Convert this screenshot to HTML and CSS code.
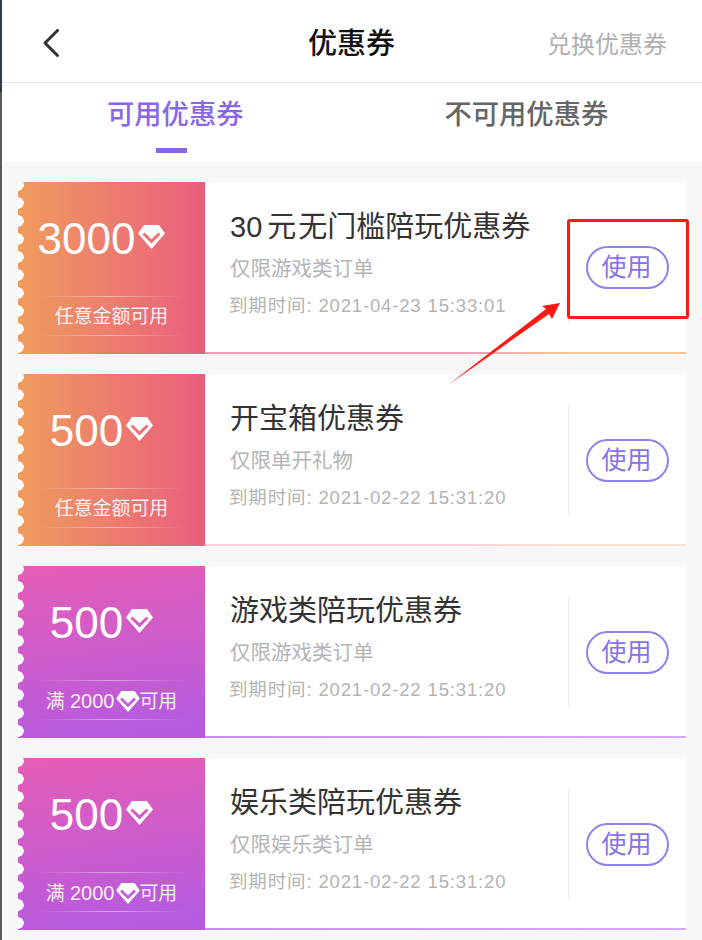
FILE: index.html
```html
<!DOCTYPE html>
<html lang="zh-CN">
<head>
    <meta charset="UTF-8">
    <meta name="viewport" content="width=device-width, initial-scale=1.0">
    <title>优惠券</title>
    <link rel="stylesheet" href="styles.css">
</head>
<body>
    <svg class="defs" width="0" height="0">
        <symbol id="gem" viewBox="0 0 27 24">
            <path fill="#fff" fill-rule="evenodd" d="M6 0H21L27 8.500 13.500 24 0 8.500ZM6.500 7.500 4.500 9.600 13.500 18.600 22.500 9.600 20.500 7.500 13.500 14.200Z"/>
        </symbol>
    </svg>
    <div class="page">
        <header class="topbar">
            <svg class="back" width="16" height="28" viewBox="0 0 16 28"><path d="M14.500 1.500 2 14l12.500 12.500" fill="none" stroke="#333" stroke-width="3" stroke-linecap="round" stroke-linejoin="round"/></svg>
            <h1>优惠券</h1>
            <a class="redeem">兑换优惠券</a>
        </header>
        <nav class="tabs">
            <div class="tab active">可用优惠券</div>
            <div class="tab">不可用优惠券</div>
        </nav>
        <main class="list">
            <section class="coupon orange strong">
                <div class="stub">
                    <div class="amount">3000<svg class="gem"><use href="#gem"/></svg></div>
                    <div class="limit">任意金额可用</div>
                </div>
                <div class="info">
                    <h2>30<span class="yuan">元</span>无门槛陪玩优惠券</h2>
                    <p class="scope">仅限游戏类订单</p>
                    <p class="date">到期时间: 2021-04-23 15:33:01</p>
                </div>
                <div class="action first"><button>使用</button></div>
            </section>
            <section class="coupon orange">
                <div class="stub">
                    <div class="amount">500<svg class="gem"><use href="#gem"/></svg></div>
                    <div class="limit">任意金额可用</div>
                </div>
                <div class="info">
                    <h2>开宝箱优惠券</h2>
                    <p class="scope">仅限单开礼物</p>
                    <p class="date">到期时间: 2021-02-22 15:31:20</p>
                </div>
                <div class="action"><button>使用</button></div>
            </section>
            <section class="coupon purple">
                <div class="stub">
                    <div class="amount">500<svg class="gem"><use href="#gem"/></svg></div>
                    <div class="limit">满 <span class="num">2000</span><svg class="gem-small"><use href="#gem"/></svg>可用</div>
                </div>
                <div class="info">
                    <h2>游戏类陪玩优惠券</h2>
                    <p class="scope">仅限游戏类订单</p>
                    <p class="date">到期时间: 2021-02-22 15:31:20</p>
                </div>
                <div class="action"><button>使用</button></div>
            </section>
            <section class="coupon purple">
                <div class="stub">
                    <div class="amount">500<svg class="gem"><use href="#gem"/></svg></div>
                    <div class="limit">满 <span class="num">2000</span><svg class="gem-small"><use href="#gem"/></svg>可用</div>
                </div>
                <div class="info">
                    <h2>娱乐类陪玩优惠券</h2>
                    <p class="scope">仅限娱乐类订单</p>
                    <p class="date">到期时间: 2021-02-22 15:31:20</p>
                </div>
                <div class="action"><button>使用</button></div>
            </section>
        </main>
    </div>
    <!-- annotation drawn over the screenshot -->
    <div class="mark-box"></div>
    <svg class="mark-arrow" width="120" height="90" viewBox="0 0 120 90"><path fill="#fb1a14" d="M1 87 99 11 95 8 113 5 105 21 102 16Z"/></svg>
</body>
</html>
```

FILE: styles.css
```css
* { box-sizing: border-box; }
html, body { margin: 0; padding: 0; }
body { font-family: "Liberation Sans", "Noto Sans CJK SC", sans-serif; background: #f7f7f7; width: 702px; height: 940px; overflow: hidden; position: relative; }
.defs { position: absolute; }
.page { border-left: 2px solid; border-image: linear-gradient(#2c3e4e 93px, #5a5a5a 93px) 1; height: 940px; }

.topbar { height: 83px; background: #fff; border-bottom: 1px solid #e4e4e4; display: flex; align-items: center; justify-content: space-between; padding: 0 35px 0 41px; position: relative; }
.back { margin-top: 4px; }
.topbar h1 { margin: 0; font-size: 29px; font-weight: 500; color: #111; position: absolute; left: 306px; top: 24px; line-height: 40px; }
.redeem { font-size: 24px; color: #b0b0b0; line-height: 34px; margin-top: 7px; }

.tabs { height: 79px; background: #fff; display: flex; }
.tab { font-size: 27.300px; font-weight: 500; color: #666; line-height: 62px; padding: 1px 0 0 105px; position: relative; }
.tab:nth-child(2) { padding-left: 201px; }
.tab.active { color: #8868e8; }
.tab.active::after { content: ""; position: absolute; left: 154px; top: 65px; width: 31px; height: 5px; background: #8868e8; }

.list { padding: 20px 16px 0 16px; display: flex; flex-direction: column; gap: 20px; }
.coupon { height: 172px; background: #fff; display: flex; position: relative; }
.coupon::after { content: ""; position: absolute; left: 187px; right: 0; bottom: 0; height: 2px; }
.orange::after { background: linear-gradient(90deg, #fad0de 55%, #f8e4d0 75%); }
.orange.strong::after { background: linear-gradient(90deg, #eda0bc 55%, #f2c896 75%); }
.purple::after { background: linear-gradient(90deg, #c88ef2, #d9a8ee); }

.stub { width: 187px; position: relative; color: #fff; display: flex; flex-direction: column; align-items: center; }
.orange .stub { background: linear-gradient(90deg, #f09c5c, #e95e80); }
.purple .stub { background: linear-gradient(172deg, #e65eb6, #b25ae2); }
.stub::before { content: ""; position: absolute; left: 0; top: 0; bottom: 0; width: 6px; background: radial-gradient(circle at 0 9px, #fff 5.500px, transparent 6px) 0 -6px / 6px 18px repeat-y; }
.amount { height: 114px; padding: 32px 20px 0 0; font-size: 44px; line-height: 50px; display: flex; align-items: flex-start; }
.gem { width: 27px; height: 24px; margin: 11px 0 0 3px; }
.limit { width: 147px; height: 40px; font-size: 18.900px; line-height: 42px; text-align: center; position: relative; white-space: nowrap; color: #fdeef0; }
.limit::before, .limit::after { content: ""; position: absolute; left: 0; right: 0; height: 1px; background: linear-gradient(90deg, transparent, rgba(255,255,255,.45), transparent); }
.limit::before { top: 0; }
.limit::after { bottom: 0; }
.num { font-size: 20px; }
.gem-small { width: 24px; height: 21px; vertical-align: -4px; margin: 0 -1px 0 2px; }

.info { width: 363px; padding: 24px 0 0 25px; }
.info h2 { margin: 0; font-size: 29px; font-weight: 400; color: #333; line-height: 42px; white-space: nowrap; }
.yuan { margin-left: 5px; margin-right: 2px; }
.scope { margin: 6px 0 0; font-size: 20.500px; color: #b4b4b4; line-height: 30px; }
.date { margin: 9px 0 0 -1px; font-size: 18.500px; color: #b4b4b4; line-height: 26px; white-space: nowrap; letter-spacing: .85px; }

.action { flex: 1; display: flex; align-items: center; margin: 32px 0; border-left: 1px solid #e8e8e8; padding-left: 17px; }
.action.first { padding-bottom: 1px; }
.action button { width: 83px; height: 43px; border: 2px solid #8e84ec; border-radius: 22px; background: #fff; color: #8a70ea; font-family: inherit; font-size: 25px; line-height: 1; padding: 0 2px 0 0; }

.mark-box { position: absolute; left: 567px; top: 219px; width: 122px; height: 100px; border: 3px solid #fb1a14; border-radius: 3px; }
.mark-arrow { position: absolute; left: 447px; top: 298px; }
```
